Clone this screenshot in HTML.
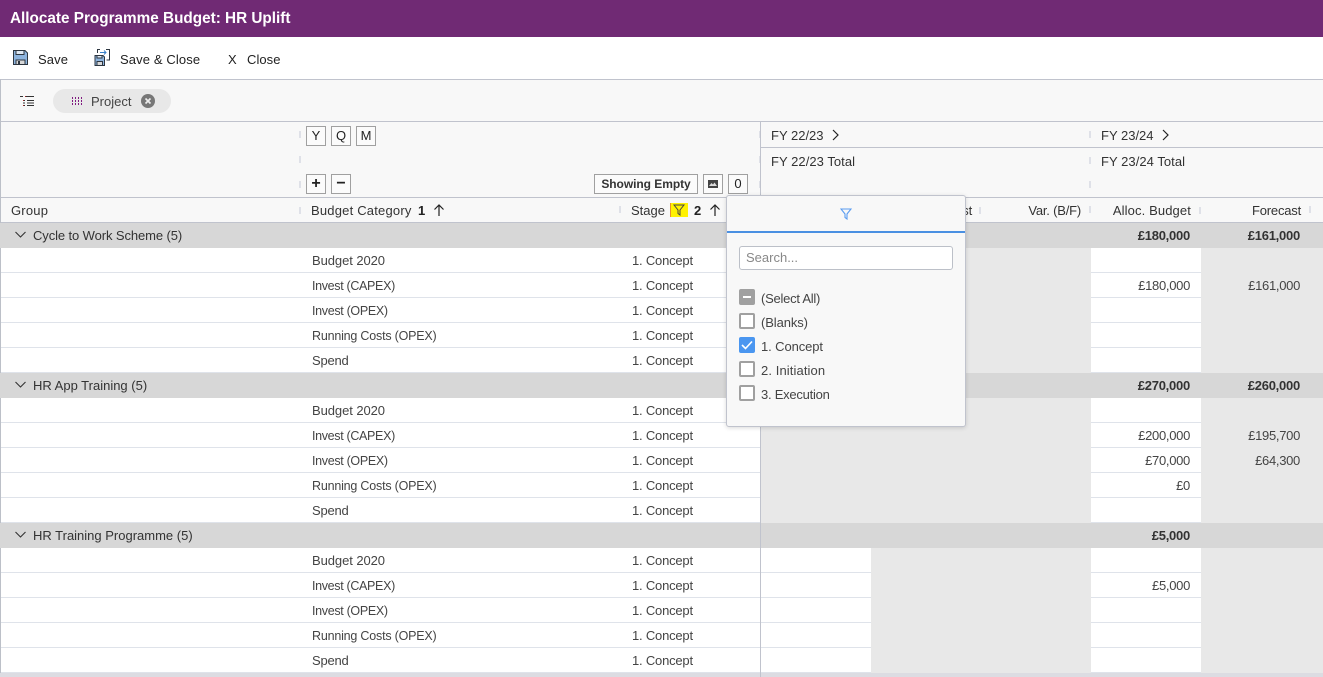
<!DOCTYPE html>
<html><head><meta charset="utf-8"><style>
html,body{margin:0;padding:0;width:1323px;height:677px;overflow:hidden;background:#fff}
body{position:relative;font-family:"Liberation Sans",sans-serif;font-size:13px;color:#444}
div,span,svg{position:absolute}
.t{white-space:nowrap;line-height:16px;letter-spacing:.2px}
.h{color:#333}
.b{font-weight:bold}
.g{left:0;width:1323px;height:25px;background:#d7d7d7}
.n{left:33px;color:#333}
.w{background:repeating-linear-gradient(to bottom,#fff 0,#fff 24px,#dfe3ea 24px,#dfe3ea 25px);height:125px}
.c{background:#e8e8e8;height:125px}
.btn{box-sizing:border-box;border:1px solid #a0a0a0;background:#fbfbfb;height:20px;width:20px;text-align:center;line-height:18px;color:#222;font-size:13px}
.s{width:2px;height:7px;background:#dfe1e8}
.l{height:1px;background:#c0c3cd}
.cb{left:739px;width:16px;height:16px;box-sizing:border-box;border:2px solid #a0a0a0;border-radius:2px;background:#fff}
.r{text-align:right}
.t.bu{left:312px;letter-spacing:-.07px}
.t.ic{left:312px;font-size:12.5px;letter-spacing:-.33px}
.t.io{left:312px;font-size:12.5px;letter-spacing:-.32px}
.t.rc{left:312px;font-size:12.5px;letter-spacing:-.2px}
.t.sp{left:312px;letter-spacing:-.2px}
.t.co{left:632px;letter-spacing:-.2px}
.t.m{letter-spacing:-.3px}
.t.mb{color:#333;letter-spacing:-.25px}
.t.p{left:761px;letter-spacing:-.2px}
</style></head><body>
<div style="left:0;top:0;width:1323px;height:37px;background:#702a74"></div>
<div class="t b" style="left:10px;top:10px;color:#fff;font-size:15.3px;line-height:18px;letter-spacing:0">Allocate Programme Budget: HR Uplift</div>

<svg style="left:13px;top:50px" width="15" height="15" viewBox="0 0 15 15"><path d="M.5.5H12L14.500 3V14.500H.5Z" fill="#8db4de" stroke="#2d3640"/><rect x="3" y=".5" width="8" height="4" fill="#dfe9f4" stroke="#2d3640"/><rect x="3" y="10" width="9" height="4.500" fill="#d8d8d8" stroke="#2d3640"/><rect x="5" y="11" width="2" height="3" fill="#2d3640"/></svg>
<div class="t" style="left:38px;top:52px;color:#222;letter-spacing:.1px">Save</div>
<svg style="left:94px;top:49px" width="16" height="17" viewBox="0 0 16 17"><path d="M1 6.500H9L10.500 8V16.500H1Z" fill="#8db4de" stroke="#2d3640"/><rect x="3" y="6.500" width="5" height="2.500" fill="#dfe9f4" stroke="#2d3640"/><rect x="3" y="12.500" width="5.500" height="4" fill="#d8d8d8" stroke="#2d3640"/><path d="M3.500 4V.5H6M12 .5H15.500V11H12.500" fill="none" stroke="#2d3640"/><path d="M6 3.500H12M10 1.500L12 3.500L10 5.500" fill="none" stroke="#3a80c8"/></svg>
<div class="t" style="left:120px;top:52px;color:#222;letter-spacing:.12px">Save &amp; Close</div>
<div class="t" style="left:228px;top:52px;color:#222">X</div>
<div class="t" style="left:247px;top:52px;color:#222;letter-spacing:.05px">Close</div>

<div style="left:0;top:79px;width:1323px;height:143px;background:#f8f8f8"></div>
<div class="l" style="left:0;top:79px;width:1323px"></div>
<div class="l" style="left:0;top:121px;width:1323px"></div>
<div class="l" style="left:761px;top:147px;width:562px"></div>
<div class="l" style="left:0;top:197px;width:1323px"></div>
<div class="l" style="left:0;top:222px;width:1323px"></div>
<div style="left:0;top:79px;width:1px;height:598px;background:#bcc0c8"></div>

<svg style="left:20px;top:95px" width="14" height="12" viewBox="0 0 14 12"><path d="M0 1.500H3M5 1.500H14M3 5.500H5M7 5.500H14M3 8H5M7 8H14M3 10.500H5M7 10.500H14" stroke="#333" stroke-width="1" fill="none"/><path d="M5 1.500H6M3 5.500H4M3 10.500H4" stroke="#a02020"/></svg>
<div style="left:53px;top:89px;width:118px;height:24px;border-radius:12px;background:#e8e8e8"></div>
<svg style="left:72px;top:97px" width="11" height="8" viewBox="0 0 11 8"><path d="M.5 0V8M3.500 0V8M6.500 0V8M9.500 0V8" stroke="#801a80" stroke-dasharray="2 1" fill="none"/></svg>
<div class="t" style="left:91px;top:94px;color:#444;letter-spacing:0">Project</div>
<svg style="left:141px;top:94px" width="14" height="14" viewBox="0 0 14 14"><circle cx="7" cy="7" r="7" fill="#777"/><path d="M4.500 4.500L9.500 9.500M9.500 4.500L4.500 9.500" stroke="#eee" stroke-width="1.600"/></svg>

<div class="btn" style="left:306px;top:126px">Y</div>
<div class="btn" style="left:331px;top:126px">Q</div>
<div class="btn" style="left:356px;top:126px">M</div>
<div class="btn b" style="left:306px;top:174px;font-size:16px">+</div>
<div class="btn b" style="left:331px;top:174px;font-size:16px">−</div>
<div class="btn b" style="left:594px;top:174px;width:104px;letter-spacing:-.05px;font-size:12px;color:#333">Showing Empty</div>
<div class="btn" style="left:703px;top:174px"></div>
<svg style="left:708px;top:180px" width="10" height="8" viewBox="0 0 10 8"><rect width="10" height="8" fill="#444"/><path d="M1 6L3.500 3L5 4.500L6.500 2.500L9 6Z" fill="#ddd"/></svg>
<div class="btn" style="left:728px;top:174px">0</div>

<div class="s" style="left:299px;top:131px"></div>
<div class="s" style="left:299px;top:156px"></div>
<div class="s" style="left:299px;top:181px"></div>
<div class="s" style="left:759px;top:131px;width:1px"></div>
<div class="s" style="left:759px;top:156px;width:1px"></div>
<div class="s" style="left:759px;top:181px;width:1px"></div>
<div class="s" style="left:1089px;top:131px"></div>
<div class="s" style="left:1089px;top:157px"></div>
<div class="s" style="left:1089px;top:181px"></div>

<div class="t h" style="left:771px;top:128px;letter-spacing:0">FY 22/23</div>
<svg style="left:831px;top:129px" width="8" height="12" viewBox="0 0 8 12"><path d="M2 1L7 6L2 11" fill="none" stroke="#222" stroke-width="1.200"/></svg>
<div class="t h" style="left:771px;top:154px;letter-spacing:.05px">FY 22/23 Total</div>
<div class="t h" style="left:1101px;top:128px;letter-spacing:0">FY 23/24</div>
<svg style="left:1161px;top:129px" width="8" height="12" viewBox="0 0 8 12"><path d="M2 1L7 6L2 11" fill="none" stroke="#222" stroke-width="1.200"/></svg>
<div class="t h" style="left:1101px;top:154px;letter-spacing:.05px">FY 23/24 Total</div>

<!-- header -->
<div style="left:0;top:198px;width:1323px;height:20px;overflow:hidden">
<div class="t h" style="left:11px;top:5px">Group</div>
<div class="t h" style="left:311px;top:5px">Budget Category</div>
<div class="t h" style="left:631px;top:5px;letter-spacing:0">Stage</div>
<div class="t h r" style="left:872px;width:100px;top:5px;letter-spacing:-.2px">Forecast</div>
<div class="t h r" style="left:981px;width:100px;top:5px;letter-spacing:-.2px">Var. (B/F)</div>
<div class="t h r" style="left:1091px;width:100px;top:5px;letter-spacing:.12px">Alloc. Budget</div>
<div class="t h r" style="left:1201px;width:100px;top:5px;letter-spacing:-.2px">Forecast</div>
</div>
<div class="t b" style="left:418px;top:203px;color:#222">1</div>
<svg style="left:433px;top:204px" width="12" height="12" viewBox="0 0 12 12"><path d="M6 12V1M1.500 5.500L6 1L10.500 5.500" fill="none" stroke="#222" stroke-width="1.200"/></svg>
<div style="left:670px;top:203px;width:18px;height:14px;background:#fff200;border-left:1px solid #e89030;box-sizing:border-box"></div>
<svg style="left:673px;top:204px" width="12" height="12" viewBox="0 0 12 12"><path d="M1 1H11L7 6V11L5 9.500V6Z" fill="none" stroke="#444" stroke-width="1"/></svg>
<div class="t b" style="left:694px;top:203px;color:#222">2</div>
<svg style="left:709px;top:204px" width="12" height="12" viewBox="0 0 12 12"><path d="M6 12V1M1.500 5.500L6 1L10.500 5.500" fill="none" stroke="#222" stroke-width="1.200"/></svg>
<div class="s" style="left:299px;top:207px"></div>
<div class="s" style="left:619px;top:206px"></div>
<div class="s" style="left:979px;top:207px"></div>
<div class="s" style="left:1089px;top:206px"></div>
<div class="s" style="left:1199px;top:207px"></div>
<div class="s" style="left:1309px;top:206px"></div>

<!-- body backgrounds -->
<div class="c" style="left:761px;top:248px;width:330px"></div>
<div class="c" style="left:1201px;top:248px;width:122px"></div>
<div class="w" style="left:1px;top:248px;width:759px"></div>
<div class="w" style="left:1091px;top:248px;width:110px"></div>
<div class="c" style="left:761px;top:398px;width:330px"></div>
<div class="c" style="left:1201px;top:398px;width:122px"></div>
<div class="w" style="left:1px;top:398px;width:759px"></div>
<div class="w" style="left:1091px;top:398px;width:110px"></div>
<div class="c" style="left:871px;top:548px;width:220px"></div>
<div class="c" style="left:1201px;top:548px;width:122px"></div>
<div class="w" style="left:1px;top:548px;width:759px"></div>
<div class="w" style="left:761px;top:548px;width:110px"></div>
<div class="w" style="left:1091px;top:548px;width:110px"></div>

<div class="g" style="top:223px"></div>
<div class="g" style="top:373px"></div>
<div class="g" style="top:523px"></div>
<div style="left:0;top:673px;width:1323px;height:4px;background:#dcdce2"></div>
<div style="left:760px;top:122px;width:1px;height:555px;background:#c0c3cd"></div>

<svg style="left:15px;top:231px" width="11" height="7" viewBox="0 0 11 7"><path d="M.5 1L5.500 6L10.500 1" fill="none" stroke="#333" stroke-width="1.100"/></svg>
<div class="t n" style="top:228px;letter-spacing:-.1px">Cycle to Work Scheme (5)</div>
<svg style="left:15px;top:381px" width="11" height="7" viewBox="0 0 11 7"><path d="M.5 1L5.500 6L10.500 1" fill="none" stroke="#333" stroke-width="1.100"/></svg>
<div class="t n" style="top:378px;letter-spacing:0">HR App Training (5)</div>
<svg style="left:15px;top:531px" width="11" height="7" viewBox="0 0 11 7"><path d="M.5 1L5.500 6L10.500 1" fill="none" stroke="#333" stroke-width="1.100"/></svg>
<div class="t n" style="top:528px;letter-spacing:0">HR Training Programme (5)</div>

<div class="t bu" style="top:253px">Budget 2020</div><div class="t co" style="top:253px">1. Concept</div>
<div class="t ic" style="top:278px">Invest (CAPEX)</div><div class="t co" style="top:278px">1. Concept</div>
<div class="t io" style="top:303px">Invest (OPEX)</div><div class="t co" style="top:303px">1. Concept</div>
<div class="t rc" style="top:328px">Running Costs (OPEX)</div><div class="t co" style="top:328px">1. Concept</div>
<div class="t sp" style="top:353px">Spend</div><div class="t co" style="top:353px">1. Concept</div>

<div class="t bu" style="top:403px">Budget 2020</div><div class="t co" style="top:403px">1. Concept</div>
<div class="t ic" style="top:428px">Invest (CAPEX)</div><div class="t co" style="top:428px">1. Concept</div>
<div class="t io" style="top:453px">Invest (OPEX)</div><div class="t co" style="top:453px">1. Concept</div>
<div class="t rc" style="top:478px">Running Costs (OPEX)</div><div class="t co" style="top:478px">1. Concept</div>
<div class="t sp" style="top:503px">Spend</div><div class="t co" style="top:503px">1. Concept</div>

<div class="t bu" style="top:553px">Budget 2020</div><div class="t co" style="top:553px">1. Concept</div>
<div class="t ic" style="top:578px">Invest (CAPEX)</div><div class="t co" style="top:578px">1. Concept</div>
<div class="t io" style="top:603px">Invest (OPEX)</div><div class="t co" style="top:603px">1. Concept</div>
<div class="t rc" style="top:628px">Running Costs (OPEX)</div><div class="t co" style="top:628px">1. Concept</div>
<div class="t sp" style="top:653px">Spend</div><div class="t co" style="top:653px">1. Concept</div>

<div class="t r b mb" style="left:1090px;width:100px;top:228px">£180,000</div>
<div class="t r b mb" style="left:1200px;width:100px;top:228px">£161,000</div>
<div class="t r m" style="left:1090px;width:100px;top:278px">£180,000</div>
<div class="t r m" style="left:1200px;width:100px;top:278px">£161,000</div>
<div class="t r b mb" style="left:1090px;width:100px;top:378px">£270,000</div>
<div class="t r b mb" style="left:1200px;width:100px;top:378px">£260,000</div>
<div class="t r m" style="left:1090px;width:100px;top:428px">£200,000</div>
<div class="t r m" style="left:1200px;width:100px;top:428px">£195,700</div>
<div class="t r m" style="left:1090px;width:100px;top:453px">£70,000</div>
<div class="t r m" style="left:1200px;width:100px;top:453px">£64,300</div>
<div class="t r m" style="left:1090px;width:100px;top:478px">£0</div>
<div class="t r b mb" style="left:1090px;width:100px;top:528px">£5,000</div>
<div class="t r m" style="left:1090px;width:100px;top:578px">£5,000</div>

<!-- popup -->
<div style="left:726px;top:195px;width:240px;height:232px;box-sizing:border-box;background:#f8f8f8;border:1px solid #c0c3cd;border-radius:3px;box-shadow:0 1px 4px rgba(0,0,0,.15)"></div>
<div style="left:727px;top:231px;width:238px;height:2px;background:#4a90e2"></div>
<svg style="left:840px;top:208px" width="12" height="12" viewBox="0 0 12 12"><path d="M1 1H11L7 6V11L5 9.500V6Z" fill="none" stroke="#5a9cf0" stroke-width="1.100"/></svg>
<div style="left:739px;top:246px;width:214px;height:24px;box-sizing:border-box;background:#fff;border:1px solid #bcc0c8;border-radius:3px"></div>
<div class="t" style="left:746px;top:250px;color:#888;letter-spacing:0">Search...</div>
<div class="cb" style="top:289px;background:#a0a0a0"></div>
<div style="left:743px;top:296px;width:8px;height:2px;background:#fff"></div>
<div class="t p" style="top:291px;letter-spacing:-.25px">(Select All)</div>
<div class="cb" style="top:313px"></div>
<div class="t p" style="top:315px;letter-spacing:-.1px">(Blanks)</div>
<div class="cb" style="top:337px;background:#4a96f0;border-color:#4a96f0"></div>
<svg style="left:739px;top:337px" width="16" height="16" viewBox="0 0 16 16"><path d="M3 8L6.500 11.500L13 4.500" fill="none" stroke="#fff" stroke-width="1.600"/></svg>
<div class="t p" style="top:339px;letter-spacing:-.1px">1. Concept</div>
<div class="cb" style="top:361px"></div>
<div class="t p" style="top:363px;letter-spacing:.1px">2. Initiation</div>
<div class="cb" style="top:385px"></div>
<div class="t p" style="top:387px;letter-spacing:-.25px">3. Execution</div>
</body></html>
